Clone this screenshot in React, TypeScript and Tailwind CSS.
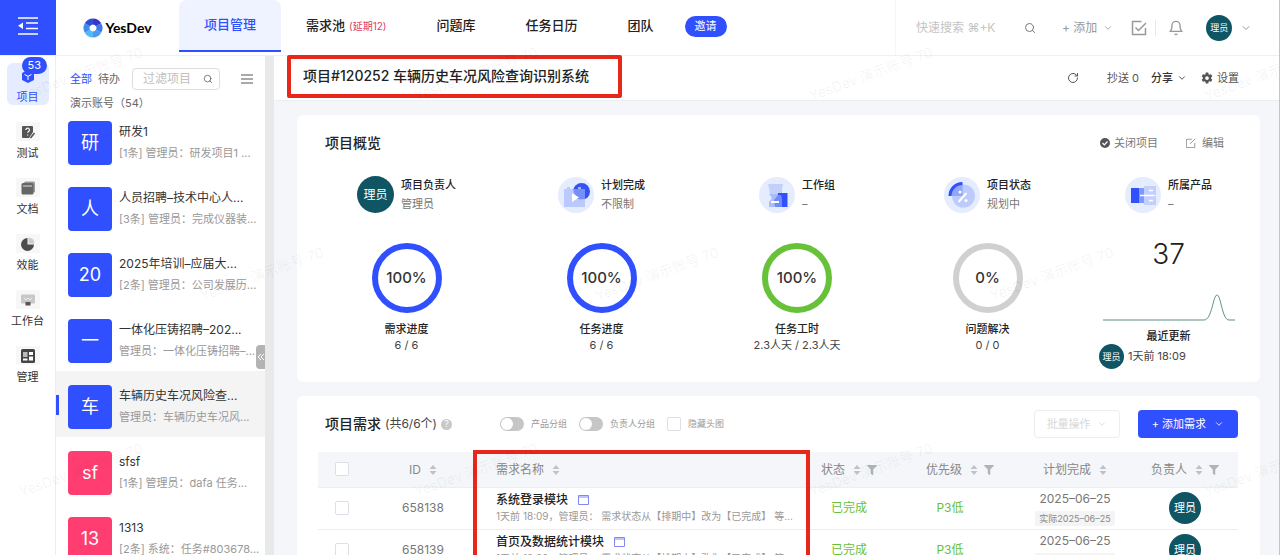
import type { ReactNode } from "react";
import { LuBell, LuChevronDown, LuRotateCw, LuSearch } from "react-icons/lu";
import { FaFilter } from "react-icons/fa";
import { IoSettingsSharp } from "react-icons/io5";

type Project = {
  id: number;
  badge: string;
  name: string;
  note: string;
  pink?: boolean;
  active?: boolean;
};

const projects: Project[] = [
  { id: 1, badge: "研", name: "研发1", note: "[1条] 管理员：研发项目1 ..." },
  { id: 2, badge: "人", name: "人员招聘–技术中心人...", note: "[3条] 管理员：完成仪器装..." },
  { id: 3, badge: "20", name: "2025年培训–应届大...", note: "[2条] 管理员：公司发展历..." },
  { id: 4, badge: "一", name: "一体化压铸招聘–202...", note: "管理员：一体化压铸招聘–..." },
  { id: 5, badge: "车", name: "车辆历史车况风险查...", note: "管理员：车辆历史车况风...", active: true },
  { id: 6, badge: "sf", name: "sfsf", note: "[1条] 管理员：dafa 任务...", pink: true },
  { id: 7, badge: "13", name: "1313", note: "[2条] 系统：任务#803678...", pink: true },
];

const navItems = [
  { label: "需求池", extra: "(延期12)" },
  { label: "问题库" },
  { label: "任务日历" },
  { label: "团队" },
];

const demands = [
  { id: 658138, name: "系统登录模块" },
  { id: 658139, name: "首页及数据统计模块" },
];

const watermarks = [
  [81, 74], [476, 74], [871, 74], [1266, 74],
  [262, 274], [657, 274], [1052, 274],
  [81, 470], [476, 470], [871, 470], [1266, 470],
];

const railItems: { label: string; icon: ReactNode; active?: boolean }[] = [
  {
    label: "项目",
    active: true,
    icon: (
      <>
        <path d="M7 1l6 3v7l-6 3-6-3V4z" fill="#304ffe" />
        <path d="M3.5 5.5L7 7.3l3.5-1.8M7 7.3V11" stroke="#fff" fill="none" />
      </>
    ),
  },
  {
    label: "测试",
    icon: (
      <>
        <path d="M2 1h9a1 1 0 011 1v5l-4 6H2a1 1 0 01-1-1V2a1 1 0 011-1z" fill="#555" />
        <path d="M4.8 5a1.8 1.8 0 113 1.3c-.7.5-1.1.7-1.1 1.5M6.7 9.5v1" stroke="#fff" strokeWidth="1.2" fill="none" />
        <path d="M13.5 8l-4 5" stroke="#555" strokeWidth="1.6" />
      </>
    ),
  },
  {
    label: "文档",
    icon: (
      <>
        <rect x="3" y="0.5" width="11" height="11" rx="1.5" fill="#999" />
        <rect x="0.5" y="2" width="12" height="11.5" rx="1.5" fill="#666" />
        <path d="M2 5h9" stroke="#ddd" strokeWidth="1" />
      </>
    ),
  },
  {
    label: "效能",
    icon: (
      <>
        <path d="M6.5 1a6.5 6.5 0 106.5 6.5H6.5z" fill="#4d4d4d" />
        <path d="M7.5 0.5a6 6 0 016 6h-6z" fill="#ccc" />
      </>
    ),
  },
  {
    label: "工作台",
    icon: (
      <>
        <rect x="0" y="1.5" width="14" height="9" rx="1" fill="#c8c8c8" />
        <path d="M3 5l2 2 2-2 2 2 2-2" stroke="#eee" fill="none" />
        <rect x="4.5" y="9" width="5" height="3.5" fill="#555" />
      </>
    ),
  },
  {
    label: "管理",
    icon: (
      <>
        <rect x="0" y="0" width="14" height="14" rx="1.5" fill="#444" />
        <rect x="2" y="3" width="4.5" height="5" fill="#bbb" />
        <rect x="8" y="3" width="4" height="3" fill="#fff" />
        <rect x="2" y="9.5" width="4.5" height="2" fill="#fff" />
        <rect x="8" y="7.5" width="4" height="4" fill="#fff" />
      </>
    ),
  },
];

const Avatar = ({ className }: { className: string }) => (
  <span className={`flex shrink-0 items-center justify-center rounded-full bg-[#0f5563] text-white ${className}`}>
    理员
  </span>
);

const Sorter = () => (
  <svg viewBox="0 0 8 10" className="h-2.5 w-2 fill-[#bfc2c8]">
    <path d="M4 0l3.5 4h-7zM4 10L.5 6h7z" />
  </svg>
);

const Logo = () => (
  <a href="#" className="flex w-[123px] shrink-0 items-center justify-center gap-0.5">
    <svg viewBox="0 0 20 20" className="size-5" fill="none" strokeWidth="6">
      <path d="M10 3.5a6.5 6.5 0 015.6 3.3" stroke="#3a35c8" />
      <path d="M15.6 6.8a6.5 6.5 0 010 6.5" stroke="#3d7bea" />
      <path d="M15.6 13.2A6.5 6.5 0 0110 16.5" stroke="#4b9af0" />
      <path d="M10 16.5a6.5 6.5 0 01-5.6-3.3" stroke="#54b8f2" />
      <path d="M4.4 13.2a6.5 6.5 0 010-6.5" stroke="#3f8ced" />
      <path d="M4.4 6.8A6.5 6.5 0 0110 3.5" stroke="#2f4fd8" />
    </svg>
    <span className="font-['Lato',sans-serif] text-sm font-bold text-black">YesDev</span>
  </a>
);

const Header = () => (
  <header className="flex h-14 shrink-0 border-b border-[#f0f0f0]">
    <button aria-label="收起菜单" className="flex h-[55px] w-14 shrink-0 items-center justify-center bg-[#304ffe] pb-1">
      <svg viewBox="0 0 20 18" className="h-[18px] w-5 stroke-white" strokeWidth="1.5">
        <path d="M0 1h20M8 6h12M8 11.5h12M0 17h20" />
        <path d="M5 5.5v6.5L0 8.75z" fill="#fff" stroke="none" />
      </svg>
    </button>
    <Logo />
    <nav className="flex h-[52px] items-center text-[13px] font-medium text-[#222]">
      <a href="#" className="flex h-full items-center rounded-t-lg border-b-2 border-[#304ffe] bg-[#eff3ff] px-[25px] text-[#304ffe]">
        项目管理
      </a>
      {navItems.map((item) => (
        <a key={item.label} href="#" className="flex items-center gap-1 px-[25px] whitespace-nowrap">
          {item.label}
          {item.extra && <span className="text-[10px] font-normal text-[#e0405e]">{item.extra}</span>}
        </a>
      ))}
      <a href="#" className="ml-1.5 rounded-full bg-[#304ffe] px-2.5 py-0.5 text-[11px] leading-[17px] font-normal text-white">
        邀请
      </a>
    </nav>
    <div className="ml-auto flex w-96 shrink-0 items-center border-l border-[#f5f5f5] pl-5 text-[#999]">
      <input
        aria-label="快速搜索"
        placeholder="快速搜索 ⌘+K"
        className="w-[108px] text-xs outline-none placeholder:text-[#c4c4c4]"
      />
      <LuSearch className="size-3 text-[#777]" />
      <button className="ml-[26px] flex items-center gap-1.5 text-xs">
        + 添加 <LuChevronDown className="size-2.5" />
      </button>
      <svg viewBox="0 0 16 16" className="ml-[18px] size-4" fill="none" stroke="currentColor" strokeWidth="1.5">
        <path d="M10.5 1.5H1.5v13h13V8M4.5 7.5L7.5 10.5 15 3" />
      </svg>
      <span className="ml-2 h-4 w-px bg-[#e8e8e8]" />
      <LuBell className="ml-3 size-4" />
      <Avatar className="ml-[22px] size-[26px] text-[9px]" />
      <LuChevronDown className="ml-2 size-3" />
    </div>
  </header>
);

const Rail = () => (
  <nav className="w-14 shrink-0 border-r border-[#eee] text-[11px] text-[#333]">
    {railItems.map((item) => (
      <a key={item.label} href="#" className="relative flex h-14 flex-col items-center py-[7px]">
        <span
          className={`flex h-[42px] w-[42px] flex-col items-center rounded-md pt-[3px] whitespace-nowrap ${
            item.active ? "bg-[#e6ecff] text-[#304ffe]" : ""
          }`}
        >
          <span className={`flex h-5 w-6 items-center justify-center ${item.active ? "" : "bg-[#f7f7f7]"}`}>
            <svg viewBox="0 0 14 14" className="size-3.5">
              {item.icon}
            </svg>
          </span>
          <span className="mt-1 leading-4">{item.label}</span>
        </span>
        {item.active && (
          <span className="absolute top-px right-2 rounded-full bg-[#304ffe] px-1.5 text-[11px] leading-[17px] text-white">
            53
          </span>
        )}
      </a>
    ))}
  </nav>
);

const ProjectList = () => (
  <aside className="relative flex w-[218px] shrink-0 border-r-[9px] border-[#e8e9eb]">
    <div className="w-full">
      <div className="h-[51px] pt-3 pr-3 pl-3.5 text-[11px] text-[#666]">
        <div className="flex h-[22px] items-center">
          <a href="#" className="mr-1.5 text-[#304ffe]">全部</a>
          <a href="#">待办</a>
          <label className="ml-3 flex h-[22px] w-[88px] items-center rounded-sm border border-[#ddd] px-1.5">
            <input
              aria-label="过滤项目"
              placeholder="过滤项目"
              className="w-full min-w-0 pl-1 text-xs outline-none placeholder:text-[#c0c0c0]"
            />
            <LuSearch className="size-2.5 shrink-0" />
          </label>
          <button aria-label="列表" className="ml-auto">
            <svg viewBox="0 0 12 10" className="h-2.5 w-3 stroke-[#555]">
              <path d="M0 1h12M0 5h12M0 9h12" />
            </svg>
          </button>
        </div>
        <p className="mt-2 leading-[11px]">演示账号（54）</p>
      </div>

      {projects.map((project) => (
        <a
          key={project.id}
          href="#"
          className={`relative flex h-[66px] gap-[7px] pt-3.5 pl-3 whitespace-nowrap ${project.active ? "bg-[#f4f4f5]" : ""}`}
        >
          {project.active && <span className="absolute top-6 left-0 h-5 w-[3px] bg-[#304ffe]" />}
          <span
            className={`flex size-11 shrink-0 items-center justify-center rounded-sm text-lg text-white ${
              project.pink ? "bg-[#ff3d71]" : "bg-[#304ffe]"
            }`}
          >
            {project.badge}
          </span>
          <span className="min-w-0">
            <span className="block text-xs leading-[22px] text-[#333]">{project.name}</span>
            <span className="block text-[11px] leading-5 text-[#999]">{project.note}</span>
          </span>
        </a>
      ))}
    </div>
    <button
      aria-label="收起"
      className="absolute top-[289px] right-0 flex h-6 w-[9px] items-center justify-center rounded-l-sm bg-[#b3b3b3] text-white"
    >
      <svg viewBox="0 0 8 8" className="size-2" fill="none" stroke="currentColor">
        <path d="M4 1L1 4l3 3M7 1L4 4l3 3" />
      </svg>
    </button>
  </aside>
);

const TitleBar = () => (
  <div className="flex h-[45px] shrink-0 items-center border-b border-[#ebedf0] bg-white pr-10 pl-[13px] text-[11px] text-[#555]">
    <h1 className="-mt-1 flex h-[43px] w-[335px] items-center rounded-xs border-4 border-[#e8261a] pl-3 text-sm font-medium whitespace-nowrap text-[#222]">
      项目#120252 车辆历史车况风险查询识别系统
    </h1>
    <button aria-label="刷新" className="ml-auto">
      <LuRotateCw className="size-3" />
    </button>
    <button className="ml-7">抄送 0</button>
    <button className="ml-3 flex items-center gap-1 font-medium text-[#333]">
      分享 <LuChevronDown className="size-2.5" />
    </button>
    <button className="ml-3.5 flex items-center gap-1">
      <IoSettingsSharp className="size-3" /> 设置
    </button>
  </div>
);

const StatHead = ({ icon, title, value }: { icon: ReactNode; title: string; value: string }) => (
  <div className="flex h-[37px] items-center gap-[7px] text-[11px]">
    {icon}
    <div>
      <p className="leading-[19px] font-medium text-[#222]">{title}</p>
      <p className="leading-[19px] text-[#777]">{value}</p>
    </div>
  </div>
);

const RoundIcon = ({ children }: { children: ReactNode }) => (
  <svg viewBox="0 0 36 36" className="size-9 shrink-0">
    <circle cx="18" cy="18" r="18" fill="#e4ecfe" />
    {children}
  </svg>
);

const Ring = ({ color, percent, title, value }: { color: string; percent: string; title: string; value: string }) => (
  <div className="mt-[30px] flex flex-col items-center text-[11px]">
    <div className={`flex size-[70px] items-center justify-center rounded-full border-[6px] text-[15px] font-medium text-[#333] ${color}`}>
      {percent}
    </div>
    <p className="mt-2 leading-4 font-medium text-[#222]">{title}</p>
    <p className="leading-4 text-[#444]">{value}</p>
  </div>
);

const Overview = () => (
  <section className="h-[267px] rounded-md bg-white">
    <div className="flex items-center pt-[18px] pr-9 pl-7 text-[11px] text-[#777]">
      <h2 className="text-sm font-medium text-[#222]">项目概览</h2>
      <button className="ml-auto flex items-center gap-1">
        <svg viewBox="0 0 12 12" className="size-2.5">
          <circle cx="6" cy="6" r="6" fill="#555" />
          <path d="M3 6l2.2 2.2L9 4.2" stroke="#fff" strokeWidth="1.5" fill="none" />
        </svg>
        关闭项目
      </button>
      <button className="ml-7 flex items-center gap-1.5">
        <svg viewBox="0 0 12 12" className="size-2.5" fill="none" stroke="#888">
          <path d="M7 1.5H.5v10h10V6M5 7l6-6" />
        </svg>
        编辑
      </button>
    </div>

    <div className="mt-[23px] grid grid-cols-[195fr_195fr_196fr_185fr_177fr] pr-[3px] pl-3">
      <div className="flex flex-col items-center">
        <StatHead icon={<Avatar className="size-[37px] text-xs" />} title="项目负责人" value="管理员" />
        <Ring color="border-[#304ffe]" percent="100%" title="需求进度" value="6 / 6" />
      </div>
      <div className="flex flex-col items-center">
        <StatHead
          icon={
            <RoundIcon>
              <circle cx="23.5" cy="14.5" r="8.5" fill="#3552f2" />
              <path d="M6 12h3v-2h3v2h8v-2h3v2h4v18H6z" fill="#b4c4fb" opacity=".85" />
              <path d="M15 12h12v10h-8z" fill="#6580f7" opacity=".7" />
              <path d="M14 16l7 4.500-7 4.500z" fill="#fff" />
            </RoundIcon>
          }
          title="计划完成"
          value="不限制"
        />
        <Ring color="border-[#304ffe]" percent="100%" title="任务进度" value="6 / 6" />
      </div>
      <div className="flex flex-col items-center">
        <StatHead
          icon={
            <RoundIcon>
              <path d="M9 7h15l-1 4v6H11l-1-6z" fill="#c3d0fb" />
              <path d="M10 17h13v13H10v-5l3-4z" fill="#aabcfb" />
              <rect x="19" y="16" width="9.5" height="14" fill="#304ffe" />
              <path d="M19 18h3l1 4v8h-7l-1-7z" fill="#6f8afa" />
              <path d="M12 25h8" stroke="#fff" strokeWidth="2" />
            </RoundIcon>
          }
          title="工作组"
          value="–"
        />
        <Ring color="border-[#67c23a]" percent="100%" title="任务工时" value="2.3人天 / 2.3人天" />
      </div>
      <div className="flex flex-col items-center">
        <StatHead
          icon={
            <RoundIcon>
              <circle cx="19.5" cy="19" r="11.5" fill="#bccbfc" />
              <path d="M18.5 7.5A11.5 11.5 0 007 19h11.5z" fill="#90a6fb" />
              <path d="M18.5 6.5A12.5 12.5 0 006 19" stroke="#304ffe" strokeWidth="3" fill="none" />
              <path d="M14.5 25l8-9" stroke="#fff" strokeWidth="2" />
              <circle cx="16" cy="15" r="1.5" fill="#fff" />
              <circle cx="22" cy="23.5" r="1.5" fill="#fff" />
            </RoundIcon>
          }
          title="项目状态"
          value="规划中"
        />
        <Ring color="border-[#d0d0d0]" percent="0%" title="问题解决" value="0 / 0" />
      </div>
      <div className="flex flex-col items-center text-[11px]">
        <StatHead
          icon={
            <RoundIcon>
              <rect x="6" y="11" width="8" height="15" fill="#304ffe" />
              <rect x="19" y="9" width="12" height="9" fill="#c3d0fb" />
              <rect x="19" y="19" width="12" height="9" fill="#c3d0fb" />
              <path d="M14 11h5v15h-5z" fill="#8098fa" />
              <path d="M15 18.5h14M24 13.5h4M24 23.5h4" stroke="#fff" strokeWidth="1.5" />
            </RoundIcon>
          }
          title="所属产品"
          value="–"
        />
        <p className="mt-6 text-[28px] leading-[34px] font-light text-[#222]">37</p>
        <svg viewBox="0 0 132 28" className="mt-[22px] h-7 w-[132px]" fill="none">
          <path d="M0 27h101c8 0 9-25 13-25s5 25 12 25h6" stroke="#5f8f86" />
        </svg>
        <p className="mt-[7px] leading-4 font-medium text-[#222]">最近更新</p>
        <p className="flex items-center gap-1 self-start pl-[19px] text-[#444]">
          <Avatar className="size-[25px] text-[9px]" /> 1天前 18:09
        </p>
      </div>
    </div>
  </section>
);

const TickBox = ({ label }: { label: string }) => (
  <input
    type="checkbox"
    aria-label={label}
    className="block size-3.5 shrink-0 appearance-none rounded-xs border border-[#dcdfe6] bg-white checked:bg-[#304ffe]"
  />
);

const Toggle = ({ label }: { label: string }) => (
  <label className="flex items-center gap-[7px]">
    <input
      type="checkbox"
      className="flex h-3.5 w-6 appearance-none items-center rounded-full bg-[#c6c6c6] px-px before:size-3 before:rounded-full before:bg-white checked:bg-[#304ffe] checked:before:ml-auto"
    />
    {label}
  </label>
);

const Th = ({ label, filter, className = "" }: { label: string; filter?: boolean; className?: string }) => (
  <th className={`font-normal ${className}`}>
    <span className="inline-flex items-center gap-2 align-middle">
      {label} <Sorter />
      {filter && <FaFilter className="-ml-0.5 size-2.5 text-[#b0b3b8]" />}
    </span>
  </th>
);

const Demands = () => (
  <section className="relative mt-3.5 rounded-md bg-white pr-[22px] pb-6 pl-[21px]">
    <div className="flex h-14 items-center pl-[7px]">
      <h2 className="text-sm font-medium text-[#222]">项目需求</h2>
      <span className="ml-1 text-xs text-[#444]">(共6/6个)</span>
      <span className="ml-1 flex size-[11px] items-center justify-center rounded-full bg-[#c8c8c8] text-[9px] text-white">
        ?
      </span>
      <div className="ml-12 flex items-center gap-3 text-[9px] text-[#999]">
        <Toggle label="产品分组" />
        <Toggle label="负责人分组" />
        <label className="flex items-center gap-[7px]">
          <TickBox label="隐藏头图" />
          隐藏头图
        </label>
      </div>
      <button
        disabled
        className="ml-auto flex h-7 items-center gap-1.5 rounded-sm border border-[#ededed] px-3 text-[11px] text-[#d8d8d8]"
      >
        批量操作 <LuChevronDown className="size-2.5" />
      </button>
      <button className="ml-[18px] flex h-7 items-center gap-2 rounded-sm bg-[#304ffe] px-3.5 text-[11px] text-white">
        <span>+ 添加需求</span> <LuChevronDown className="size-2.5" />
      </button>
    </div>

    <table className="w-full table-fixed text-center text-xs text-[#777]">
      <thead className="h-[35px] bg-[#f5f6f9] text-[#888]">
        <tr>
          <th className="w-12">
            <span className="flex justify-center">
              <TickBox label="全选" />
            </span>
          </th>
          <Th label="ID" className="w-[114px]" />
          <Th label="需求名称" className="pl-4 text-left" />
          <Th label="状态" filter className="w-[90px]" />
          <Th label="优先级" filter className="w-[124px] pl-2" />
          <Th label="计划完成" className="w-[114px]" />
          <Th label="负责人" filter className="w-[106px]" />
        </tr>
      </thead>
      <tbody>
        {demands.map((demand) => (
          <tr key={demand.id} className="h-[42px] border-t border-[#ebeef5]">
            <td>
              <span className="flex justify-center">
                <TickBox label={`选择 ${demand.id}`} />
              </span>
            </td>
            <td>{demand.id}</td>
            <td className="pl-4 text-left">
              <a href="#" className="flex items-center gap-2.5 leading-4 font-medium text-[#222]">
                {demand.name}
                <svg viewBox="0 0 11 10" className="h-2.5 w-[11px]" fill="none" stroke="#8288f0">
                  <path d="M.5.5h10v9H.5zM.5 2h10" />
                </svg>
              </a>
              <p className="truncate text-[10px] leading-4 text-[#999]">
                1天前 18:09，管理员： 需求状态从【排期中】改为【已完成】 等...
              </p>
            </td>
            <td className="text-[#67c23a]">已完成</td>
            <td className="pr-3 text-[#67c23a]">P3低</td>
            <td>
              <p className="leading-4">2025–06–25</p>
              <span className="mt-1 inline-block rounded-xs bg-[#f4f4f5] px-1 align-top text-[9px] leading-[15px] whitespace-nowrap text-[#888]">
                实际2025–06–25
              </span>
            </td>
            <td>
              <span className="flex justify-center">
                <Avatar className="size-8 text-[11px]" />
              </span>
            </td>
          </tr>
        ))}
      </tbody>
    </table>
    {/* name column highlight */}
    <div className="pointer-events-none absolute top-[54px] bottom-0 left-44 w-[337px] border-4 border-b-0 border-[#e8261a]" />
  </section>
);

export default function App() {
  return (
    <div className="relative flex h-screen flex-col overflow-hidden border-r border-[#c4c4c8] bg-white font-['Inter','Noto_Sans_CJK_SC',sans-serif] antialiased">
      <Header />
      <div className="flex min-h-0 flex-1">
        <Rail />
        <ProjectList />
        <div className="flex min-w-0 flex-1 flex-col bg-[#f4f6f9]">
          <TitleBar />
          <main className="min-h-0 flex-1 overflow-hidden pt-3.5 pr-[19px] pl-[23px]">
            <Overview />
            <Demands />
          </main>
        </div>
      </div>

      {/* watermark */}
      <div aria-hidden className="pointer-events-none absolute inset-0 overflow-hidden text-sm text-black/6">
        {watermarks.map(([x, y]) => (
          <span
            key={`${x}-${y}`}
            className="absolute -translate-x-1/2 -translate-y-1/2 -rotate-20 whitespace-nowrap"
            style={{ left: x, top: y }}
          >
            YesDev 演示账号 70
          </span>
        ))}
      </div>
    </div>
  );
}
